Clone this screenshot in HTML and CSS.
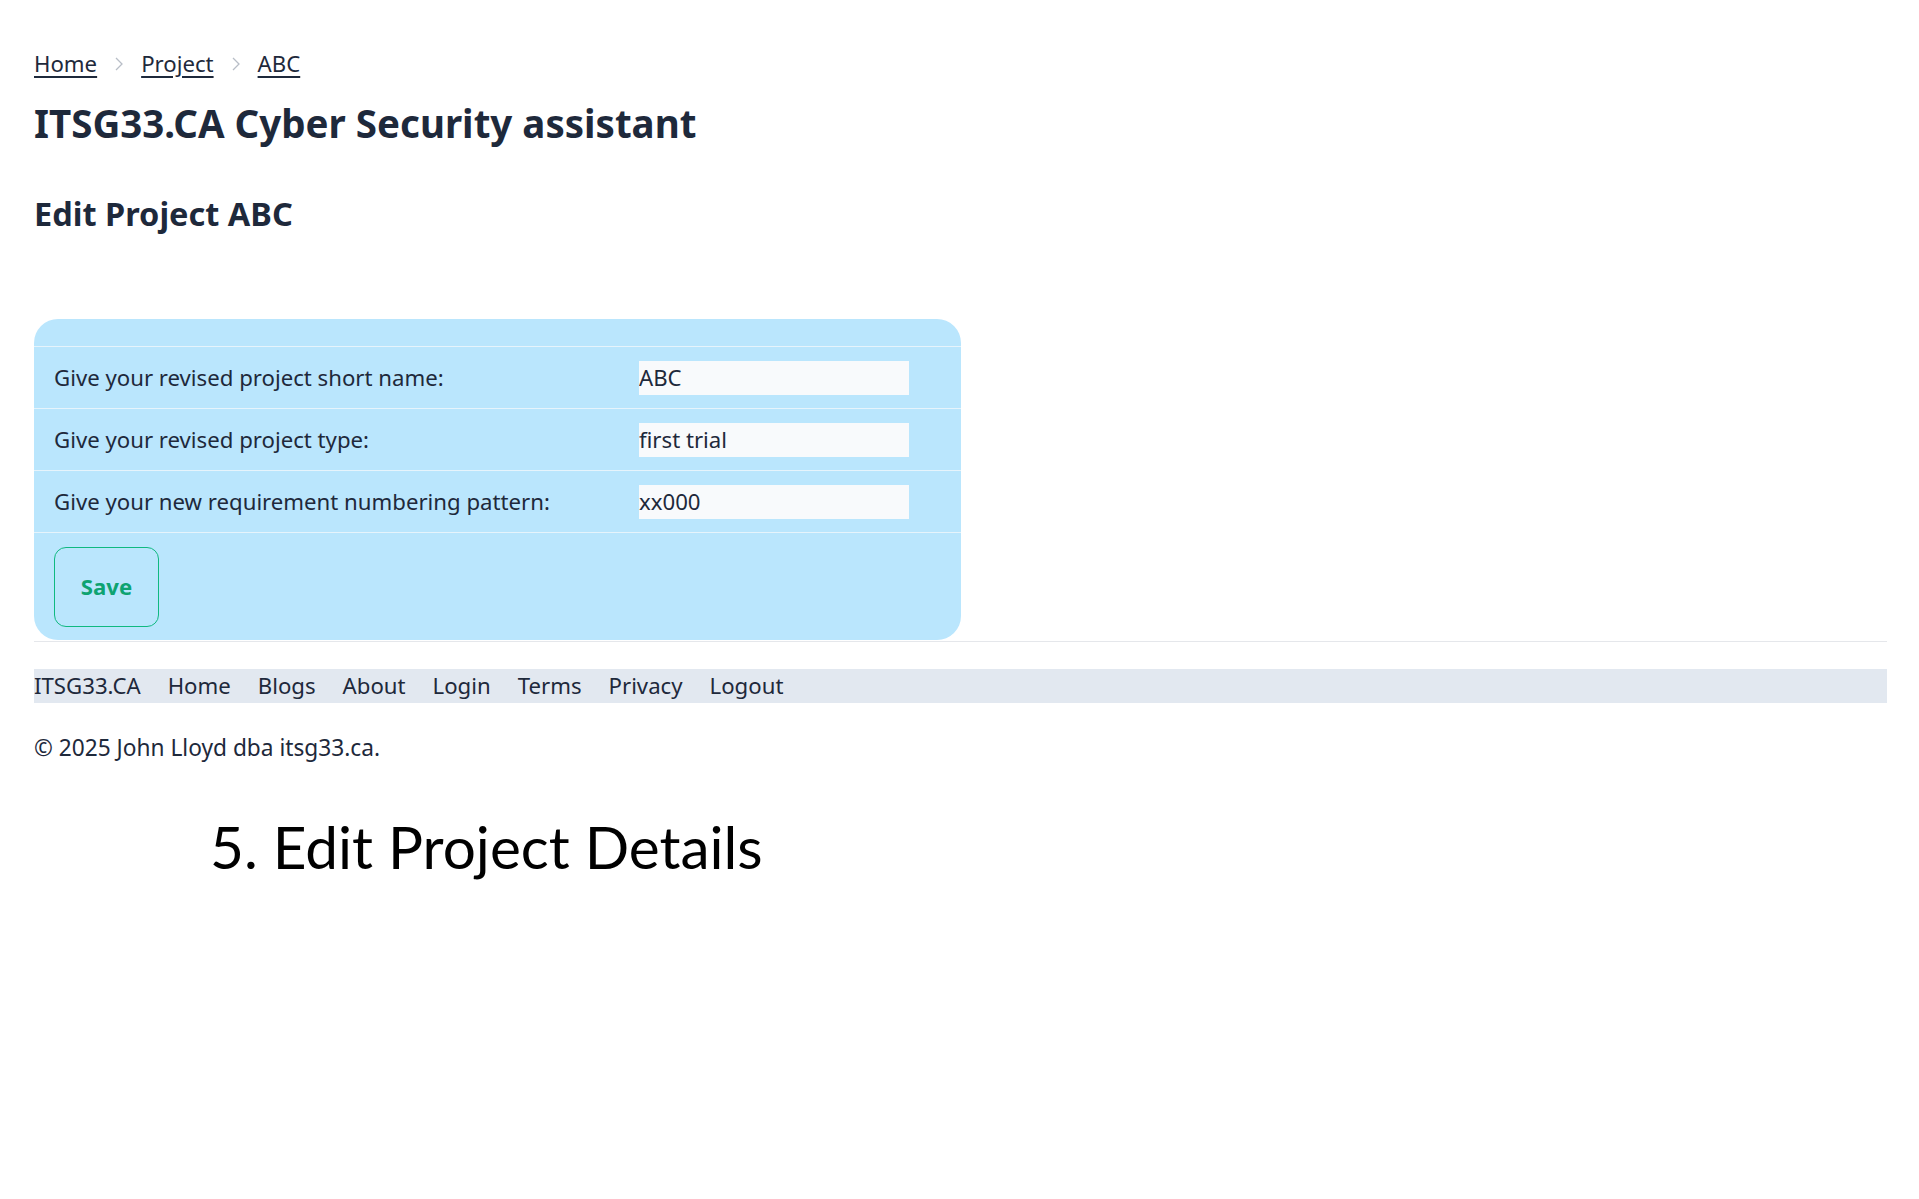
FILE: index.html
```html
<!DOCTYPE html>
<html lang="en">
<head>
<meta charset="utf-8">
<title>Edit Project ABC</title>
<link rel="stylesheet" href="styles.css">
</head>
<body>
<div class="page">
  <nav class="crumbs">
    <a href="#">Home</a>
    <svg class="chev" width="10" height="16" viewBox="0 0 10 16"><polyline points="2,2 8,8 2,14" fill="none" stroke="#b8bec7" stroke-width="1.3"/></svg>
    <a href="#">Project</a>
    <svg class="chev" width="10" height="16" viewBox="0 0 10 16"><polyline points="2,2 8,8 2,14" fill="none" stroke="#b8bec7" stroke-width="1.3"/></svg>
    <a href="#">ABC</a>
  </nav>
  <h1 class="title">ITSG33.CA Cyber Security assistant</h1>
  <h2 class="subtitle">Edit Project ABC</h2>

  <form class="card">
    <div class="row">
      <label class="lbl">Give your revised project short name:</label>
      <input class="inp" type="text" value="ABC">
    </div>
    <div class="row">
      <label class="lbl">Give your revised project type:</label>
      <input class="inp" type="text" value="first trial">
    </div>
    <div class="row">
      <label class="lbl">Give your new requirement numbering pattern:</label>
      <input class="inp" type="text" value="xx000">
    </div>
    <div class="actions">
      <button class="save" type="button">Save</button>
    </div>
  </form>

  <footer class="foot">
    <ul class="links">
      <li>ITSG33.CA</li>
      <li>Home</li>
      <li>Blogs</li>
      <li>About</li>
      <li>Login</li>
      <li>Terms</li>
      <li>Privacy</li>
      <li>Logout</li>
    </ul>
    <p class="copy">© 2025 John Lloyd dba itsg33.ca.</p>
  </footer>

  <p class="caption">5. Edit Project Details</p>
</div>
</body>
</html>
```

FILE: styles.css
```css
html, body {
  margin: 0;
  padding: 0;
  background: #ffffff;
}
body {
  font-family: "Noto Sans", "Lato", sans-serif;
  color: #1e293b;
  font-size: 22.2px;
  line-height: 34px;
}
.page {
  padding: 47px 32px 0 34px;
}
.crumbs {
  display: flex;
  align-items: center;
  gap: 17px;
  height: 34px;
}
.crumbs a {
  color: #1e293b;
  text-decoration: underline;
  text-underline-offset: 4px;
  text-decoration-thickness: 1.5px;
}
.chev {
  display: block;
}
.title {
  margin: 20px 0 0;
  font-size: 38.5px;
  line-height: 45px;
  font-weight: 700;
  color: #1e293b;
}
.subtitle {
  margin: 50px 0 0;
  font-size: 32.5px;
  line-height: 36px;
  font-weight: 700;
  color: #1e293b;
}
.card {
  margin: 87px 0 0;
  width: 927px;
  background: #bae6fd;
  border-radius: 24px;
  padding-top: 27px;
  box-sizing: border-box;
}
.row {
  display: grid;
  grid-template-columns: 585px 270px;
  align-items: center;
  height: 61px;
  padding-left: 20px;
  border-top: 1px solid #e6f4fc;
}
.lbl {
  color: #1e293b;
}
.inp {
  font: inherit;
  color: #1e293b;
  background: #f8fafc;
  border: 0;
  padding: 0;
  margin: 0;
  height: 34px;
  width: 270px;
  outline: none;
}
.actions {
  border-top: 1px solid #e6f4fc;
  padding: 14px 20px 13px;
}
.save {
  font: inherit;
  font-weight: 700;
  color: #0ea371;
  background: transparent;
  border: 1.5px solid #10b981;
  border-radius: 12px;
  width: 105px;
  height: 80px;
  padding: 0;
  display: block;
}
.foot {
  border-top: 1px solid #e5e7eb;
  margin-top: 1px;
}
.links {
  list-style: none;
  margin: 27px 0 0;
  padding: 0;
  display: flex;
  gap: 27px;
  background: #e2e8f0;
  height: 34px;
  font-size: 22.2px;
}
.copy {
  margin: 28px 0 0;
  font-size: 22.7px;
}
.caption {
  margin: 47px 0 0 176px;
  font-family: "Lato", sans-serif;
  font-size: 58.5px;
  line-height: 68px;
  color: #000000;
}
```
